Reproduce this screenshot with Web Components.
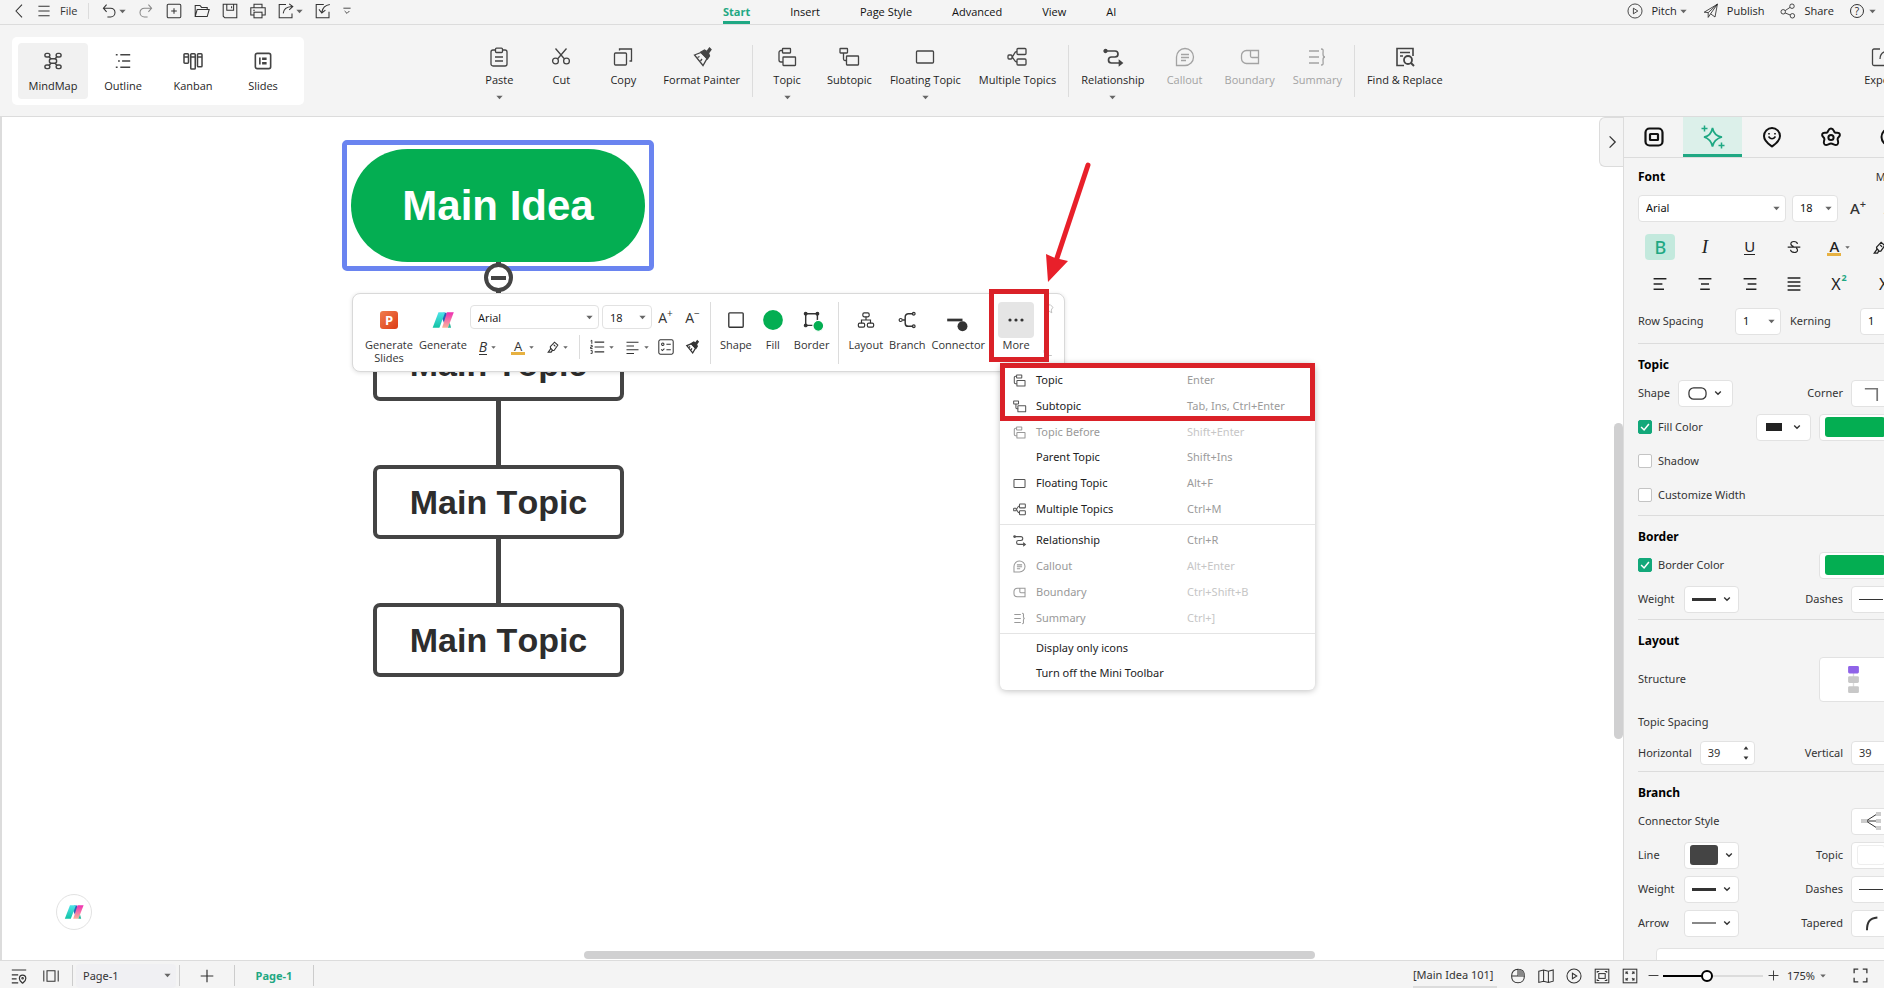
<!DOCTYPE html>
<html lang="en">
<head>
<meta charset="utf-8">
<title>Mind map editor</title>
<style>
  html, body {
    margin: 0;
    height: 100%;
    overflow: hidden;
  }

  body {
    font-family: 'Noto Sans', 'Open Sans', sans-serif;
    font-size: 11px;
    line-height: 16px;
    color: #1f1f1f;
    background: #f4f4f4;
    --green: #1fa883;
    --fill: #04ae52;
    --line: #dcdcdc;
    --ink: #444;
    --bar: #f4f4f4;
  }
</style>
</head>
<body>
<mind-app></mind-app>

<script>
const ICONS = {
  back: '<path d="M12.5 2 5 10l7.5 8"/>',
  menu: '<path d="M3 4h14M3 10h14M3 16h14"/>',
  undo: '<path d="M7 2 3 6.5 7 11M3 6.5h9a5.5 5.5 0 0 1 0 11H8"/>',
  redo: '<path d="m13 2 4 4.500-4 4.500M17 6.500H8a5.500 5.500 0 0 0 0 11h4"/>',
  add: '<rect x="1.500" y="1.500" width="17" height="17" rx="1.500"/><path d="M10 6.500v7M6.500 10h7"/>',
  open: '<path d="M1.500 17V3h6l2 2.500h7V8M1.500 17 4 8h15l-2.500 9z"/>',
  save: '<path d="M1.500 1.500h17v17h-15l-2-2zM6 1.500V9h8.500V1.500M12 4v2.500"/>',
  print: '<path d="M5 6V1.500h10V6M5 15H1V6h18v9h-4"/><rect x="5" y="11.500" width="10" height="7"/><path d="M4 9h2"/>',
  send: '<path d="M10 2H1.500v16.500h16V13M6.500 13c.5-5 3.500-8 11-8.500M14 1l4.500 3.500L14 8.500"/>',
  take: '<path d="M11 2H1.500v16.500h16V11M18.500 2c-6 1-9 4-10 9.500M5 8l3.500 4.500L13 9"/>',
  more: '<path d="M1 3h18M4 10l6 6 6-6" stroke-width="2.200"/>',
  play: '<circle cx="10" cy="10" r="8.800"/><path d="M8 6.500v7l5.500-3.500z"/>',
  plane: '<path d="M1.500 11.500 18 1.500l-3 16-5.500-4L18 1.500 6.500 12v6l3-4.500M1.500 11.500l5 .5"/>',
  share: '<circle cx="4" cy="11" r="2.800"/><circle cx="15" cy="4" r="2.800"/><circle cx="15.500" cy="16" r="2.800"/><path d="m6.500 9.500 6-4M6.500 12.500l6.300 2.500"/>',
  mindmap: '<g stroke-width="1.600"><rect x="6" y="7.500" width="8" height="5" rx="2.200"/><rect x="1" y="1.500" width="5.500" height="4" rx="2"/><rect x="13.500" y="1.500" width="5.500" height="4" rx="2"/><rect x="1" y="14.500" width="5.500" height="4" rx="2"/><rect x="13.500" y="14.500" width="5.500" height="4" rx="2"/><path d="m5.500 5 2.500 3M14.500 5 12 8M5.500 15 8 12.200M14.500 15 12 12.200"/></g>',
  outline: '<path d="M2 3h2M7 3h11M4.500 10h2M9 10h9M2 17h2M7 17h11" stroke-width="1.800"/>',
  kanban: '<g stroke-width="1.700"><rect x="0" y="2" width="5" height="10.500" rx="1"/><rect x="7.500" y="2" width="5" height="17" rx="1"/><rect x="15" y="2" width="5" height="14.500" rx="1"/><path d="M0 5.500h5M7.500 5.500h5M15 5.500h5"/></g>',
  slides: '<rect x="1.500" y="1.500" width="17" height="17" rx="2" stroke-width="1.800"/><path d="M6.500 6v8" stroke-width="1.800"/><path d="M9 6h5v3H9zM9 11h5v3H9z" fill="currentColor" stroke="none"/>',
  paste: '<rect x="2" y="3" width="16" height="16" rx="2"/><rect x="6.500" y="1.200" width="7" height="4.300" rx="1" fill="#f4f4f4"/><path d="M6 10h8M6 14h8"/>',
  cut: '<circle cx="4.500" cy="14" r="2.900"/><circle cx="15.500" cy="14" r="2.900"/><path d="m6.500 12 9-10.500M13.500 12l-9-10.500"/>',
  copy: '<rect x="1.500" y="6" width="12" height="12" rx="1"/><path d="M6.500 3.500V2h12v12h-2"/>',
  brush: '<path d="M2.500 8 9 5.500l6 6-4 7z"/><path d="m9 5 3.500-2 2.500 1.500L17.500 1 19 2.500 16.500 6l1 3-2 3z" fill="currentColor"/><path d="m5.500 10.500 2-1M8.500 14l1.500-2"/>',
  topic: '<rect x="5.500" y="1.500" width="8" height="4.500" rx=".5"/><path d="M5.500 3.500H4a2 2 0 0 0-2 2v7.500a2 2 0 0 0 2 2h2"/><rect x="6" y="10" width="12.500" height="8.500" rx=".5"/>',
  subtopic: '<rect x="1" y="1.500" width="7.500" height="4.500" rx=".5"/><path d="M4.500 6v6a1.500 1.500 0 0 0 1.500 1.500h2"/><rect x="7.500" y="9" width="12" height="9" rx=".5"/>',
  floating: '<rect x="1.500" y="4" width="17" height="12" rx="1"/>',
  multiple: '<rect x="10" y="1.500" width="9" height="6" rx="1"/><rect x="10" y="12" width="9" height="6" rx="1"/><rect x="1" y="8" width="4" height="4" rx="1"/><path d="M5 9.500C7.500 9 6.500 4.500 10 4.500M5 10.500c2.500.5 1.500 4.500 5 4.500"/>',
  relation: '<g stroke-width="1.700"><path d="M2.500 4H12a3 3 0 0 1 0 6H8.500a3 3 0 0 0 0 6H17"/><circle cx="2.500" cy="4" r="1.300" fill="currentColor"/><path d="m16.500 14 2.500 2-2.500 2z" fill="currentColor"/></g>',
  callout: '<path d="M1.500 18.500V10A8.500 8.500 0 1 1 10 18.500z"/><path d="M6 7.500h8M6 10.500h8M6 13.500h5"/>',
  boundary: '<path d="M6.500 3.500h12v13h-12a5 5 0 0 1-5-5v-3a5 5 0 0 1 5-5zM10.500 3.500V9a1.500 1.500 0 0 0 1.500 1.500h6.500"/>',
  summary: '<path d="M2 4h10M2 10h10M2 16h10M14 2c3 0 2 2 2 5q0 3 2 3-2 0-2 3c0 3 1 5-2 5"/>',
  find: '<path d="M18 9V1.500H2v17h7" stroke-width="1.600"/><path d="M5 5.500h10M5 9h3"/><circle cx="13" cy="13" r="4" stroke-width="1.800"/><path d="m16 16 3 3" stroke-width="2"/>',
  export: '<path d="M9 2H3a1.500 1.500 0 0 0-1.500 1.500V17A1.500 1.500 0 0 0 3 18.500h14v-6M9 12c0-5 2-8 9-8M15 1l3 3-3 3"/>',
  bullets: '<path d="M7 4h12M7 10h12M7 16h12" stroke-width="1.500"/><path d="M2 2.500 3.500 1.500V6M2 8h2v2H2v2h2.500M2 14.500h2V18H2" stroke-width="1.200"/>',
  left: '<path d="M2 3h16M2 8h10M2 13h16M2 18h10" stroke-width="1.500"/>',
  alignl: '<path d="M2 3.500h16M2 10h11M2 16.500h13" stroke-width="1.800"/>',
  alignc: '<path d="M2 3.500h16M5 10h10M4 16.500h12" stroke-width="1.800"/>',
  alignr: '<path d="M2 3.500h16M7 10h11M5 16.500h13" stroke-width="1.800"/>',
  alignj: '<path d="M2 2.500h16M2 7.500h16M2 12.500h16M2 17.500h16" stroke-width="1.600"/>',
  checklist: '<rect x="1" y="1" width="18" height="18" rx="2"/><circle cx="6" cy="6.500" r="1.500"/><path d="M10.500 6.500H16M10.500 13.500H16M4 13l1.500 1.500L8 12"/>',
  pen: '<path d="M2 18.500h5l1.500-2.500 3.500-.5 6-8.500-5.500-5-7 7.500.5 3.500z"/><path d="m6 12 3.500 3.500M11 6l3 3"/>',
  square: '<rect x="2" y="2" width="16" height="16" rx="1" stroke-width="1.500"/>',
  disc: '<circle cx="10" cy="10" r="11" fill="#04ae52" stroke="none"/>',
  frame: '<path d="M3 3h13v9M3 3v13h8" stroke-width="1.600"/><circle cx="3" cy="3" r="1.500" fill="currentColor"/><circle cx="16" cy="3" r="1.500" fill="currentColor"/><circle cx="3" cy="16" r="1.500" fill="currentColor"/><circle cx="17" cy="16.500" r="6" fill="#04ae52" stroke="#fff"/>',
  tree: '<rect x="6.500" y="2" width="7" height="4.500" rx="1.500"/><rect x="1.500" y="13.500" width="7" height="4.500" rx="1.500"/><rect x="11.500" y="13.500" width="7" height="4.500" rx="1.500"/><path d="M10 6.500V10M5 13.500V10h10v3.500"/>',
  branch: '<circle cx="3" cy="10" r="1.700"/><path d="M5 10h3M17 3h-5.500A3.500 3.500 0 0 0 8 6.500v7a3.500 3.500 0 0 0 3.500 3.500H17" stroke-width="1.600"/><circle cx="17.500" cy="3" r="1.500"/><circle cx="17.500" cy="17" r="1.500"/>',
  connector: '<path d="M-2 10h17" stroke-width="3"/><circle cx="15" cy="17" r="5.500" fill="currentColor" stroke="none"/>',
  dots: '<g fill="currentColor" stroke="none"><circle cx="2.500" cy="10" r="2"/><circle cx="10" cy="10" r="2"/><circle cx="17.500" cy="10" r="2"/></g>',
  pin: '<path d="m8 4 5-3 5 5-3 5 1 5-5-3-4 3M8 4l-5 2 4 4"/>',
  corner: '<path d="M7 18v-8h9M2 5V0"/>',
  chevron: '<path d="m7 3 7 7-7 7" stroke-width="1.600"/>',
  props: '<g stroke-width="2.200"><rect x="1.500" y="1.500" width="17" height="17" rx="4"/><rect x="6" y="7" width="8" height="6" rx=".5"/></g>',
  spark: '<path d="M9.500 1Q11 9 19 10 11 12 9.500 19.500 8 12 1 10 8 9 9.500 1z" stroke-width="1.700"/><path d="M1.500-1.500v6M-1.500 1.500h6M18.500 15.500v6M15.500 18.500h6" stroke-width="1.500"/>',
  smile: '<path d="M10 19.500c-2-1.500-8-5-8-10.500a8 8 0 0 1 16 0c0 5.500-6 9-8 10.500z" stroke-width="2"/><path d="M6.500 9.500q3.500 4.500 7 0M7 6v1.500M13 6v1.500" stroke-width="1.600"/>',
  flower: '<path d="M10 1.500c3 0 2.500 3.200 4 4 1.500.6 4-.8 4.800 1.500.8 2.500-2 3-2.200 5 0 2 1.800 3.800-.2 5.500-2.500 1.500-3.900-1-6.400-1s-3.900 2.500-6.400 1c-2-1.700-.2-3.500-.2-5.500-.2-2-3-2.500-2.200-5C2 4.700 4.500 6.100 6 5.500c1.500-.8 1-4 4-4z" stroke-width="2"/><circle cx="10" cy="10.500" r="2.600" stroke-width="2"/>',
  clock: '<circle cx="10" cy="10" r="8.500" stroke-width="2"/><path d="M10 5v5l3 2" stroke-width="2"/>',
  strike: '<path d="M15 5.500C14 1 5.500 1 5.500 5.500q0 3 4 3.800M5 14c.5 5 10 5 10 .5q0-2-2-3M1 10.200h18" stroke-width="1.700"/>',
  locate: '<path d="M1 2.500h18M1 8.500h8M1 13.500h6M1 18.500h8" stroke-width="1.500"/><path d="M14.500 19c-1.500-1.500-4-3-4-6a4 4 0 0 1 8 0c0 3-2.500 4.500-4 6z" stroke-width="1.500"/><circle cx="14.500" cy="12.800" r="1"/>',
  strip: '<path d="M1 3v14M19 3v14M5 3.500h10v13H5z"/>',
  plus: '<path d="M10 1v18M1 10h18" stroke-width="1.700"/>',
  minus: '<path d="M1 10h18" stroke-width="1.700"/>',
  mouse: '<path d="M10 1.500c5 0 8 3.500 8 8.500s-3 8.500-8 8.500-8-3.500-8-8.500 3-8.500 8-8.500zM2 10h16M10 1.500V10"/><path d="M10 2c5 0 8 3 8 8h-8z" fill="#888" stroke="none"/>',
  map: '<path d="m1 4 6-1.500 6 1.500 6-1.500v14L13 18l-6-1.500L1 18zM7 2.500v14M13 4v14"/>',
  fit: '<rect x="1.500" y="1.500" width="17" height="17"/><rect x="6" y="7" width="8" height="6"/><path d="M4 6V4.500h2.500M16 6V4.500h-2.500M4 14v1.500h2.500M16 14v1.500h-2.500"/>',
  spread: '<rect x="1.500" y="1.500" width="17" height="17"/><path d="M5 7.500V5h2.500M12.500 5H15v2.500M15 12.500V15h-2.500M7.500 15H5v-2.500M5 5l2.500 2.500M15 5l-2.500 2.500M15 15l-2.500-2.500M5 15l2.500-2.500"/>',
  full: '<path d="M1.500 7V1.500H7M13 1.500h5.500V7M18.500 13v5.500H13M7 18.500H1.500V13" stroke-width="1.700"/>',
  logo: '<defs><linearGradient id="a" x1="0" y1="0" x2="0" y2="1"><stop stop-color="#4fe3ea"/><stop offset="1" stop-color="#12c3a4"/></linearGradient><linearGradient id="b" x1="0" y1="0" x2="0" y2="1"><stop stop-color="#ee2fb2"/><stop offset="1" stop-color="#fbb59b"/></linearGradient></defs><g stroke="none"><path d="M10 2h4l1 8-4 3-2-5z" fill="#2a62b8"/><path d="M5 1.500h7.500L6 18.500h-7.500z" fill="url(#a)"/><path d="M14.500 1.500H22l-6.500 17H9z" fill="url(#b)"/><path d="m17.500 13 1.500 5.500h-3.500z" fill="#27b79c"/></g>',
  stack: '<g stroke="none"><path d="M9.500 2h1v16h-1z" fill="#ddd"/><rect x="6" width="8" height="5.500" rx="1" fill="#8f63e8"/><rect x="6" y="7.500" width="8" height="5" rx="1" fill="#c8c8c8"/><rect x="6" y="15" width="8" height="5" rx="1" fill="#c8c8c8"/></g>',
  fan: '<path d="M5 10 16 3M5 10h11M5 10l11 7" stroke-width="1"/><g fill="#ccc" stroke="none"><path d="M0 8h6v4H0zM15 1h5v4h-5zM15 8h5v4h-5zM15 15h5v4h-5z"/></g>',
  check: '<path d="m3.500 10 5 5 8-10" stroke="#fff" stroke-width="2.500"/>',
  pill: '<rect x="1" y="4" width="18" height="12" rx="5" stroke-width="1.300"/>',
  rectcorner: '<path d="M3 5h13v13" stroke-width="1.800" stroke="#777"/>',
  taper: '<path d="M5 19C5 9 8 4 18 3" stroke-width="2.500"/>',
  down: '<path d="m3 6 7 7 7-7" stroke-width="3.500"/>',
  caret: '<path d="M1 5h18l-9 10z" fill="#666" stroke="none"/>',
  caretup: '<path d="M2 15h16L10 4z" fill="currentColor" stroke="none"/>',
  caretdown: '<path d="M2 5h16l-8 11z" fill="currentColor" stroke="none"/>'
};

const RESET = `
  :host { display: block; }
  * { box-sizing: border-box; }
  button, input, select {
    font: inherit;
    color: inherit;
    margin: 0;
    padding: 0;
    border: 0;
    background: none;
  }
  button { display: flex; align-items: center; justify-content: center; }
  a { color: inherit; text-decoration: none; }
`;

class Base extends HTMLElement {
  constructor() {
    super();

    this.attachShadow({ mode: 'open' });
  }

  render(css, html) {
    this.shadowRoot.innerHTML = `<style>${RESET}${css}</style>${html}`;
  }
}

class UiIcon extends Base {
  connectedCallback() {
    const size = this.getAttribute('size') || 16;

    this.render(
      `
      :host { display: block; flex: none; }
      svg { display: block; overflow: visible; }
      `,
      `<svg width="${size}" height="${size}" viewBox="0 0 20 20" fill="none" stroke="currentColor"
        stroke-width="${this.getAttribute('weight') || 1.3}" aria-hidden="true">${ICONS[this.getAttribute('name')]}</svg>`
    );
  }
}

// Drop-down with its arrow; the options come from a comma separated attribute
class UiSelect extends Base {
  connectedCallback() {
    const options = this.getAttribute('options').split(',');

    this.render(
      `
      :host { display: grid; align-items: center; height: 27px; background: #fff;
        border: 1px solid #e2e2e2; border-radius: 4px; box-sizing: border-box; }
      select, ui-icon { grid-area: 1 / 1; }
      select { width: 100%; height: 100%; padding-left: 7px; appearance: none; outline: 0; }
      ui-icon { justify-self: end; margin-right: 5px; pointer-events: none; }
      `,
      `<select aria-label="${this.getAttribute('label')}">
        ${options.map((option) => `<option>${option}</option>`).join('')}
      </select>
      <ui-icon name="caret" size="7"></ui-icon>`
    );
  }
}

class TitleBar extends Base {
  connectedCallback() {
    const tabs = ['Insert', 'Page Style', 'Advanced', 'View', 'AI'];

    this.render(
      `
      :host { border-bottom: 1px solid var(--line); background: var(--bar); font-family: 'Open Sans', sans-serif; }
      header { display: grid; grid-template-columns: 723fr 397fr 800fr; height: 24px; }
      .left, .right { display: flex; align-items: center; gap: 12px; padding-bottom: 2px; }
      .left { padding-left: 12px; color: #333; }
      .left .start { display: flex; align-items: center; gap: 8px; padding-right: 11px;
        border-right: 1px solid var(--line); height: 16px; }
      .pair { gap: 2px; }
      .dim { color: #888; }
      nav { display: flex; gap: 40px; white-space: nowrap; color: #111; }
      nav a { padding-top: 4px; height: 24px; }
      nav a.on { color: var(--green); font-weight: bold; border-bottom: 3px solid var(--green); }
      .right { justify-content: flex-end; padding-right: 44px; gap: 16px; }
      .right button { gap: 8px; }
      .right button ui-icon + ui-icon, .right span + ui-icon { margin-left: -5px; }
      .help { width: 14px; height: 14px; border: 1px solid #333; border-radius: 50%; font-size: 10px;
        line-height: 12px; margin-right: 2px; }
      `,
      `<header>
        <div class="left">
          <div class="start">
            <button aria-label="Back"><ui-icon name="back"></ui-icon></button>
            <button aria-label="Menu"><ui-icon name="menu"></ui-icon></button>
            <button>File</button>
          </div>
          <button class="pair" aria-label="Undo"><ui-icon name="undo"></ui-icon><ui-icon name="caret" size="7"></ui-icon></button>
          <button class="dim" aria-label="Redo"><ui-icon name="redo"></ui-icon></button>
          ${['add', 'open', 'save', 'print'].map((name) => `<button aria-label="${name}"><ui-icon name="${name}"></ui-icon></button>`).join('')}
          <button class="pair" aria-label="Send"><ui-icon name="send"></ui-icon><ui-icon name="caret" size="7"></ui-icon></button>
          <button aria-label="Import"><ui-icon name="take"></ui-icon></button>
          <button aria-label="Customize"><ui-icon name="more" size="8"></ui-icon></button>
        </div>
        <nav>
          <a class="on" href="#start">Start</a>
          ${tabs.map((tab) => `<a href="#tab">${tab}</a>`).join('')}
        </nav>
        <div class="right">
          <button><ui-icon name="play" weight="1"></ui-icon><span>Pitch</span><ui-icon name="caret" size="7"></ui-icon></button>
          <button><ui-icon name="plane" weight="1"></ui-icon>Publish</button>
          <button><ui-icon name="share" weight="1"></ui-icon>Share</button>
          <button aria-label="Help"><span class="help">?</span><ui-icon name="caret" size="7"></ui-icon></button>
        </div>
      </header>`
    );
  }
}

class RibbonButton extends Base {
  connectedCallback() {
    this.render(
      `
      button { flex-direction: column; justify-content: flex-start; min-width: 62px; height: 68px; padding: 2px 9px 0;
        white-space: nowrap; }
      ui-icon { color: var(--ink); }
      .label { margin: 5px 0 6px; }
      :host([disabled]) button, :host([disabled]) ui-icon { color: #a3a3a3; }
      :host([mode]) button { width: 70px; height: 56px; padding: 9px 0 0; border-radius: 4px; }
      :host([mode]) .label { margin-top: 8px; }
      :host([on]) button { background: #f1f1f1; }
      `,
      `<button${this.hasAttribute('disabled') ? ' disabled' : ''}>
        <ui-icon name="${this.getAttribute('icon')}" size="${this.hasAttribute('mode') ? 18 : 20}"></ui-icon>
        <span class="label"><slot></slot></span>
        ${this.hasAttribute('drop') ? '<ui-icon name="caret" size="7"></ui-icon>' : ''}
      </button>`
    );
  }
}

class RibbonBar extends Base {
  connectedCallback() {
    this.render(
      `
      :host { background: var(--bar); border-bottom: 1px solid var(--line); font-family: 'Open Sans', sans-serif; }
      section { display: grid; grid-template-columns: 1fr auto 1fr; align-items: start; height: 91px; padding: 12px 0 0; }
      .modes { display: flex; justify-self: start; margin-left: 12px; padding: 6px; background: #fff; border-radius: 5px; }
      .tools { display: flex; padding-top: 8px; }
      .rule { width: 1px; height: 52px; margin: 0 3px; background: var(--line); }
      .end { justify-self: end; padding: 8px 8px 0 0; }
      `,
      `<section>
        <div class="modes">
          <ribbon-button mode on icon="mindmap">MindMap</ribbon-button>
          <ribbon-button mode icon="outline">Outline</ribbon-button>
          <ribbon-button mode icon="kanban">Kanban</ribbon-button>
          <ribbon-button mode icon="slides">Slides</ribbon-button>
        </div>
        <div class="tools">
          <ribbon-button icon="paste" drop>Paste</ribbon-button>
          <ribbon-button icon="cut">Cut</ribbon-button>
          <ribbon-button icon="copy">Copy</ribbon-button>
          <ribbon-button icon="brush">Format Painter</ribbon-button>
          <div class="rule"></div>
          <ribbon-button icon="topic" drop>Topic</ribbon-button>
          <ribbon-button icon="subtopic">Subtopic</ribbon-button>
          <ribbon-button icon="floating" drop>Floating Topic</ribbon-button>
          <ribbon-button icon="multiple">Multiple Topics</ribbon-button>
          <div class="rule"></div>
          <ribbon-button icon="relation" drop>Relationship</ribbon-button>
          <ribbon-button icon="callout" disabled>Callout</ribbon-button>
          <ribbon-button icon="boundary" disabled>Boundary</ribbon-button>
          <ribbon-button icon="summary" disabled>Summary</ribbon-button>
          <div class="rule"></div>
          <ribbon-button icon="find">Find &amp; Replace</ribbon-button>
        </div>
        <div class="end"><ribbon-button icon="export">Export</ribbon-button></div>
      </section>`
    );
  }
}

class MiniToolbar extends Base {
  connectedCallback() {
    this.render(
      `
      :host { background: #fff; border: 1px solid #d9d9d9; border-radius: 8px; box-shadow: 0 1px 4px rgba(0, 0, 0, .12);
        font-family: 'Open Sans', sans-serif; }
      .bar { display: flex; height: 77px; padding: 8px 10px 0 9px; color: #333; line-height: 13px; }
      .tool { flex-direction: column; justify-content: flex-start; padding-top: 9px; gap: 9px; height: 62px; }
      .wide { width: 54px; }
      .p { width: 18px; height: 18px; border-radius: 3px; background: linear-gradient(135deg, #ef7d4f, #dd3c14);
        color: #fff; font: bold 13px/18px 'Open Sans', sans-serif; }
      .format { display: flex; flex-direction: column; gap: 6px; padding-top: 3px; }
      .row { display: flex; align-items: center; height: 24px; }
      .row ui-select { height: 24px; color: #111; }
      .family { width: 129px; margin-right: 3px; }
      .size { width: 50px; }
      .a { width: 27px; font-size: 14px; }
      .a sup { font-size: 10px; line-height: 0; margin-top: -8px; }
      .drop { width: 35px; gap: 4px; }
      .check { width: 24px; }
      .brush { width: 28px; }
      .b { font-size: 14px; font-style: italic; line-height: 14px; border-bottom: 1px solid #333; }
      .color { font-size: 13px; line-height: 12px; width: 14px; border-bottom: 3px solid #e7b141; }
      .row .rule { height: 24px; margin: 0 4px; }
      .rule { width: 1px; height: 62px; background: var(--line); }
      .format + .rule { margin-left: 4px; }
      .group { display: flex; gap: 12px; padding: 0 9px; }
      .group.tight { gap: 6px; padding-right: 7px; }
      .more { width: 36px; margin-left: 6px; padding-top: 0; gap: 0; }
      .more span { display: grid; place-items: center; width: 36px; height: 36px; border-radius: 4px; background: #e5e5e5; }
      .side { display: flex; flex-direction: column; justify-content: space-between; padding: 2px 0 10px 9px; color: #aaa; }
      `,
      `<div class="bar">
        <button class="tool wide"><span class="p">P</span><span>Generate<br>Slides</span></button>
        <button class="tool wide"><ui-icon name="logo" size="18"></ui-icon>Generate</button>
        <div class="format">
          <div class="row">
            <ui-select class="family" label="Font" options="Arial,Inter"></ui-select>
            <ui-select class="size" label="Font size" options="18,20,24"></ui-select>
            <button class="a">A<sup>+</sup></button>
            <button class="a">A<sup>−</sup></button>
          </div>
          <div class="row">
            <button class="drop"><span class="b">B</span><ui-icon name="caret" size="5"></ui-icon></button>
            <button class="drop"><span class="color">A</span><ui-icon name="caret" size="5"></ui-icon></button>
            <button class="drop" aria-label="Highlight"><ui-icon name="pen" size="12" weight="1.800"></ui-icon><ui-icon name="caret" size="5"></ui-icon></button>
            <div class="rule"></div>
            <button class="drop" aria-label="List"><ui-icon name="bullets"></ui-icon><ui-icon name="caret" size="5"></ui-icon></button>
            <button class="drop" aria-label="Align"><ui-icon name="left" size="15"></ui-icon><ui-icon name="caret" size="5"></ui-icon></button>
            <button class="check" aria-label="Checklist"><ui-icon name="checklist"></ui-icon></button>
            <button class="brush" aria-label="Format painter"><ui-icon name="brush" size="14" weight="1.800"></ui-icon></button>
          </div>
        </div>
        <div class="rule"></div>
        <div class="group">
          <button class="tool"><ui-icon name="square" size="18"></ui-icon>Shape</button>
          <button class="tool"><ui-icon name="disc" size="18"></ui-icon>Fill</button>
          <button class="tool"><ui-icon name="frame" size="18"></ui-icon>Border</button>
        </div>
        <div class="rule"></div>
        <div class="group tight">
          <button class="tool"><ui-icon name="tree" size="18"></ui-icon>Layout</button>
          <button class="tool"><ui-icon name="branch" size="18"></ui-icon>Branch</button>
          <button class="tool"><ui-icon name="connector" size="18"></ui-icon>Connector</button>
        </div>
        <button class="tool more"><span><ui-icon name="dots"></ui-icon></span>More</button>
        <div class="side"><ui-icon name="pin" size="11"></ui-icon><ui-icon name="corner" size="11"></ui-icon></div>
      </div>`
    );
  }
}

class MoreMenu extends Base {
  connectedCallback() {
    const groups = [
      [
        ['topic', 'Topic', 'Enter'],
        ['subtopic', 'Subtopic', 'Tab, Ins, Ctrl+Enter'],
        ['topic', 'Topic Before', 'Shift+Enter', true],
        ['', 'Parent Topic', 'Shift+Ins'],
        ['floating', 'Floating Topic', 'Alt+F'],
        ['multiple', 'Multiple Topics', 'Ctrl+M']
      ],
      [
        ['relation', 'Relationship', 'Ctrl+R'],
        ['callout', 'Callout', 'Alt+Enter', true],
        ['boundary', 'Boundary', 'Ctrl+Shift+B', true],
        ['summary', 'Summary', 'Ctrl+]', true]
      ],
      [
        ['', 'Display only icons', ''],
        ['', 'Turn off the Mini Toolbar', '']
      ]
    ];

    this.render(
      `
      :host { width: 315px; background: #fff; border-radius: 6px; box-shadow: 0 1px 6px rgba(0, 0, 0, .25); padding: 4px 0; box-sizing: border-box; }
      .group + .group { border-top: 1px solid #e4e4e4; margin-top: 2px; padding-top: 2px; }
      button { display: grid; grid-template-columns: 23px 151px auto; justify-content: start; justify-items: start;
        width: 100%; height: 26px; padding-left: 13px; color: #222; }
      button.plain { height: 25px; padding-bottom: 2px; }
      .key { color: #9b9b9b; }
      ui-icon { color: #555; }
      button:disabled, button:disabled ui-icon { color: #999; }
      button:disabled .key { color: #c6c6c6; }
      `,
      groups
        .map(
          (rows) => `
        <div class="group" role="group">
          ${rows
            .map(
              ([icon, label, key, off]) => `
            <button role="menuitem" class="${icon ? '' : 'plain'}"${off ? ' disabled' : ''}>
              ${icon ? `<ui-icon name="${icon}" size="13" weight="1.600"></ui-icon>` : '<i></i>'}
              <span>${label}</span><span class="key">${key}</span>
            </button>`
            )
            .join('')}
        </div>`
        )
        .join('')
    );
  }
}

class MapCanvas extends Base {
  connectedCallback() {
    this.render(
      `
      :host { position: relative; overflow: hidden; background: #fff; box-shadow: inset 2px 0 #dcdcdc; }
      :host > * { position: absolute; }
      .links { left: 496px; top: 144px; width: 5px; height: 380px; background: #444; }
      .node { display: grid; place-items: center; left: 373px; width: 251px; height: 74px; background: #fff; border: 4px solid #444;
        border-radius: 7px; font: bold 34px/40px 'Liberation Sans', Arial, sans-serif; font-kerning: none; color: #2d2d2d; }
      .root { left: 351px; top: 32px; width: 294px; height: 113px; border: 0; border-radius: 57px; background: var(--fill);
        color: #fff; font-size: 42px; }
      .pick { left: 342px; top: 23px; width: 312px; height: 131px; border: 5px solid #6a84f0; border-radius: 5px; }
      .fold { left: 484px; top: 146px; width: 29px; height: 29px; border: 4px solid #444; border-radius: 50%; background: #fff; }
      .fold i { width: 15px; height: 4px; background: #444; }
      mini-toolbar { left: 352px; top: 176px; }
      more-menu { left: 1000px; top: 246px; }
      .mark { border: 5px solid #da2128; }
      .mark.a { left: 989px; top: 172px; width: 60px; height: 73px; }
      .mark.b { left: 1000px; top: 246px; width: 315px; height: 58px; }
      .arrow { left: 1040px; top: 40px; }
      .ai { left: 56px; bottom: 30px; width: 36px; height: 36px; border: 1px solid #e2e2e2; border-radius: 50%; background: #fff; }
      .thumb { background: #d0d0d1; border-radius: 5px; }
      .h { left: 36%; right: 19%; bottom: 1px; height: 8px; }
      .v { right: 0; top: 306px; width: 9px; height: 316px; }
      .fly { right: 0; top: 0; width: 24px; height: 50px; background: var(--bar); border: 1px solid var(--line); border-right: 0;
        border-radius: 6px 0 0 6px; color: #333; }
      `,
      `<div class="links"></div>
      <div class="node" style="top: 210px">Main Topic</div>
      <div class="node" style="top: 348px">Main Topic</div>
      <div class="node" style="top: 486px">Main Topic</div>
      <div class="pick"></div>
      <div class="node root">Main Idea</div>
      <button class="fold" aria-label="Collapse"><i></i></button>
      <mini-toolbar></mini-toolbar>
      <more-menu></more-menu>
      <div class="mark a"></div>
      <div class="mark b"></div>
      <svg class="arrow" width="56" height="130" viewBox="0 0 56 130" aria-hidden="true">
        <path d="M48 8 15 107" stroke="#e8202a" stroke-width="5" stroke-linecap="round"/>
        <path d="M8 125 6 97l9 4 13 3z" fill="#e8202a"/>
      </svg>
      <button class="ai" aria-label="Assistant"><ui-icon name="logo" size="16"></ui-icon></button>
      <div class="thumb h"></div>
      <div class="thumb v"></div>
      <button class="fly" aria-label="Collapse panel"><ui-icon name="chevron"></ui-icon></button>`
    );
  }
}

// Button that shows a preview (line, shape or swatch) and a chevron
class PreviewButton extends Base {
  connectedCallback() {
    this.render(
      `
      button { width: 55px; height: 27px; gap: 7px; background: #fff; border: 1px solid #e2e2e2; border-radius: 4px; color: #333; }
      :host([wide]) button { width: 87px; }
      `,
      `<button aria-label="${this.getAttribute('label')}"><slot></slot><ui-icon name="down" size="8"></ui-icon></button>`
    );
  }
}

class PanelSection extends Base {
  connectedCallback() {
    this.render(
      `
      :host { padding: 10px 0 3px; border-bottom: 1px solid var(--line); }
      :host([first]) { padding-top: 8px; }
      :host([last]) { border: 0; padding-bottom: 0; }
      .head { display: flex; justify-content: space-between; align-items: center; height: 22px; }
      h2 { margin: 0; font-size: 12px; color: #000; }
      `,
      `<div class="head"><h2>${this.getAttribute('heading')}</h2><slot name="action"></slot></div><slot></slot>`
    );
  }
}

class FormatPanel extends Base {
  connectedCallback() {
    const spin = (id, label) => `
      <label for="${id}">${label}</label>
      <span class="spin"><input id="${id}" value="39" inputmode="numeric"><span><ui-icon name="caretup" size="6"></ui-icon><ui-icon name="caretdown" size="6"></ui-icon></span></span>`;

    this.render(
      `
      :host { background: var(--bar); border-left: 1px solid var(--line); color: #333; overflow: hidden; }
      nav { display: grid; grid-template-columns: repeat(5, 59px); height: 41px; border-bottom: 1px solid var(--line); color: #111; }
      nav button { padding-top: 3px; border-bottom: 3px solid transparent; }
      nav .on { color: var(--green); background: #dcf0ea; border-color: var(--green); }
      .body { padding: 0 14px; }
      .more { padding-right: 3px; }
      .row { display: flex; align-items: center; height: 34px; gap: 8px; white-space: nowrap; }
      .push { margin-left: auto; }
      .r40 { height: 40px; gap: 6px; }
      .icons { display: grid; grid-template-columns: repeat(6, 1fr); align-items: center; height: 38px; color: #222; }
      .icons button { justify-self: center; height: 26px; gap: 4px; }
      .icons.low { height: 36px; }
      .fam { flex: 1; }
      .size { width: 46px; }
      ui-select { color: #111; }
      .a { width: 28px; font-size: 15px; font-weight: 500; }
      .a sup { font-size: 11px; line-height: 0; margin-top: -8px; }
      .bold { width: 30px; border-radius: 4px; background: #c3e9dd; color: var(--green); font-size: 18px; font-weight: 500; }
      .it { font: italic 19px 'Liberation Serif', serif; }
      .un { font-size: 15px; line-height: 15px; border-bottom: 1px solid #222; }
      .color { width: 14px; font-size: 15px; font-weight: 500; line-height: 14px; border-bottom: 3px solid #e7b141; }
      .x { font-size: 16px; }
      .x sup { font-size: 9px; font-weight: bold; line-height: 0; margin: -12px 0 0 -3px; color: var(--green); }
      .spacing { display: grid; grid-template-columns: 1fr 46px 61px 46px; gap: 9px; align-items: center; height: 38px; }
      .tick { display: flex; align-items: center; gap: 6px; }
      .tick input { appearance: none; width: 14px; height: 14px; border: 1px solid #c4c4c4; border-radius: 2px; background: #fff; }
      .tick input:checked { background: #12a87a; border-color: #12a87a; }
      .tick input, .tick ui-icon { grid-area: 1 / 1; }
      .box { display: grid; place-items: center; }
      .structure { height: 54px; }
      .structure button { width: 87px; height: 45px; padding-left: 12px; background: #fff; border: 1px solid #e2e2e2; border-radius: 4px; gap: 22px; }
      .h32 { height: 32px; }
      .h30 { height: 30px; }
      .spin { display: flex; align-items: center; width: 55px; height: 24px; background: #fff; border: 1px solid #e2e2e2; border-radius: 4px; }
      .spin input { width: 42px; padding-left: 7px; outline: 0; }
      .spin span { display: flex; flex-direction: column; gap: 4px; }
      .stroke { width: 24px; height: 3px; background: #333; }
      .thin { height: 1px; }
      .grey { height: 2px; background: #888; }
      .swatch { width: 60px; height: 20px; border-radius: 3px; background: var(--fill); }
      .dark { width: 28px; background: #444; }
      .none { width: 28px; background: #fff; border: 1px solid #eee; }
      .solid { width: 16px; height: 8px; background: #222; margin-right: 4px; }
      .w { min-width: 38px; }
      .theme { height: 40px; margin: 8px 0 0 18px; background: #fff; border: 1px solid #e2e2e2; border-radius: 4px; }
      `,
      `<nav>
        <button aria-label="Page"><ui-icon name="props" size="20"></ui-icon></button>
        <button class="on" aria-label="Style"><ui-icon name="spark" size="20"></ui-icon></button>
        <button aria-label="Mark"><ui-icon name="smile" size="20"></ui-icon></button>
        <button aria-label="Clipart"><ui-icon name="flower" size="20"></ui-icon></button>
        <button aria-label="History"><ui-icon name="clock" size="20"></ui-icon></button>
      </nav>
      <div class="body">
        <panel-section first heading="Font">
          <a class="more" slot="action" href="#more">More</a>
          <div class="row r40">
            <ui-select class="fam" label="Font" options="Arial,Inter"></ui-select>
            <ui-select class="size" label="Font size" options="18,20,24"></ui-select>
            <button class="a">A<sup>+</sup></button>
            <button class="a">A<sup>−</sup></button>
          </div>
          <div class="icons">
            <button class="bold">B</button>
            <button class="it">I</button>
            <button><span class="un">U</span></button>
            <button aria-label="Strikethrough"><ui-icon name="strike" size="14"></ui-icon></button>
            <button><span class="color">A</span><ui-icon name="caret" size="5"></ui-icon></button>
            <button aria-label="Highlight"><ui-icon name="pen" size="13" weight="2"></ui-icon><ui-icon name="caret" size="5"></ui-icon></button>
          </div>
          <div class="icons low">
            <button aria-label="Align left"><ui-icon name="alignl"></ui-icon></button>
            <button aria-label="Align center"><ui-icon name="alignc"></ui-icon></button>
            <button aria-label="Align right"><ui-icon name="alignr"></ui-icon></button>
            <button aria-label="Justify"><ui-icon name="alignj"></ui-icon></button>
            <button class="x">X<sup>2</sup></button>
            <button class="x">X</button>
          </div>
          <div class="spacing">
            <span>Row Spacing</span><ui-select label="Row spacing" options="1,2"></ui-select>
            <span>Kerning</span><ui-select label="Kerning" options="1,2"></ui-select>
          </div>
        </panel-section>
        <panel-section heading="Topic">
          <div class="row">
            <span>Shape</span><preview-button label="Shape"><ui-icon name="pill" size="19"></ui-icon></preview-button>
            <span class="push">Corner</span><preview-button label="Corner"><ui-icon name="rectcorner" size="19"></ui-icon></preview-button>
          </div>
          <div class="row">
            <label class="tick"><span class="box"><input type="checkbox" checked><ui-icon name="check" size="12"></ui-icon></span>Fill Color</label>
            <preview-button class="push" label="Fill type"><span class="solid"></span></preview-button>
            <preview-button wide label="Fill color"><span class="swatch"></span></preview-button>
          </div>
          <div class="row"><label class="tick"><input type="checkbox">Shadow</label></div>
          <div class="row"><label class="tick"><input type="checkbox">Customize Width</label></div>
        </panel-section>
        <panel-section heading="Border">
          <div class="row">
            <label class="tick"><span class="box"><input type="checkbox" checked><ui-icon name="check" size="12"></ui-icon></span>Border Color</label>
            <preview-button class="push" wide label="Border color"><span class="swatch"></span></preview-button>
          </div>
          <div class="row">
            <span class="w">Weight</span><preview-button label="Weight"><span class="stroke"></span></preview-button>
            <span class="push">Dashes</span><preview-button label="Dashes"><span class="stroke thin"></span></preview-button>
          </div>
        </panel-section>
        <panel-section heading="Layout">
          <div class="row structure">
            <span>Structure</span>
            <button class="push" aria-label="Structure"><ui-icon name="stack" size="27"></ui-icon><ui-icon name="down" size="8"></ui-icon></button>
          </div>
          <div class="row h32">Topic Spacing</div>
          <div class="row h30">
            ${spin('h', 'Horizontal')}
            <span class="push"></span>
            ${spin('v', 'Vertical')}
          </div>
        </panel-section>
        <panel-section last heading="Branch">
          <div class="row">
            <span>Connector Style</span>
            <preview-button class="push" label="Connector style"><ui-icon name="fan" size="20"></ui-icon></preview-button>
          </div>
          <div class="row">
            <span class="w">Line</span><preview-button label="Line"><span class="swatch dark"></span></preview-button>
            <span class="push">Topic</span><preview-button label="Topic"><span class="swatch none"></span></preview-button>
          </div>
          <div class="row">
            <span class="w">Weight</span><preview-button label="Weight"><span class="stroke"></span></preview-button>
            <span class="push">Dashes</span><preview-button label="Dashes"><span class="stroke thin"></span></preview-button>
          </div>
          <div class="row">
            <span class="w">Arrow</span><preview-button label="Arrow"><span class="stroke grey"></span></preview-button>
            <span class="push">Tapered</span><preview-button label="Tapered"><ui-icon name="taper" size="16"></ui-icon></preview-button>
          </div>
        </panel-section>
        <div class="theme"></div>
      </div>`
    );
  }
}

class StatusBar extends Base {
  connectedCallback() {
    this.render(
      `
      :host { background: var(--bar); border-top: 1px solid var(--line); }
      footer { display: flex; align-items: center; height: 27px; padding: 2px 52px 0 11px; color: #333; }
      .views { display: flex; gap: 16px; padding-right: 13px; }
      .cell { display: flex; align-items: center; justify-content: center; height: 21px; border-left: 1px solid #ccc; }
      .pages { width: 107px; }
      .pages ui-select { width: 100px; height: 24px; border: 0; background: #f0f0f3; }
      .new { width: 55px; }
      .current { width: 80px; border-right: 1px solid #ccc; color: var(--green); font-weight: bold; }
      .info { align-self: stretch; margin-left: auto; width: 84px; padding-top: 4px; line-height: 16px;
        border-bottom: 2px solid #dcdcdc; white-space: nowrap; }
      .tools { display: flex; align-items: center; gap: 12px; padding: 0 10px 0 13px; }
      input { width: 100px; height: 12px; margin: 0 5px 0 4px; appearance: none; background: linear-gradient(#000, #000) 0 5px / 43px 2px no-repeat,
        linear-gradient(#dcdcdc, #dcdcdc) 0 5px / 100% 2px no-repeat; }
      input::-webkit-slider-thumb { appearance: none; width: 12px; height: 12px; border: 2px solid #000; border-radius: 50%; background: #fff; }
      .zoom { gap: 5px; margin: 0 27px 0 8px; }
      `,
      `<footer>
        <div class="views">
          <button aria-label="Locate"><ui-icon name="locate"></ui-icon></button>
          <button aria-label="Slides"><ui-icon name="strip"></ui-icon></button>
        </div>
        <div class="cell pages"><ui-select label="Page" options="Page-1"></ui-select></div>
        <div class="cell new"><button aria-label="Add page"><ui-icon name="plus" size="14"></ui-icon></button></div>
        <a class="cell current" href="#page-1">Page-1</a>
        <span class="info">[Main Idea 101]</span>
        <div class="tools">
          ${['mouse', 'map', 'play', 'fit', 'spread'].map((name) => `<button aria-label="${name}"><ui-icon name="${name}"></ui-icon></button>`).join('')}
        </div>
        <button aria-label="Zoom out"><ui-icon name="minus" size="11"></ui-icon></button>
        <input type="range" min="0" max="100" value="43" aria-label="Zoom">
        <button aria-label="Zoom in"><ui-icon name="plus" size="11"></ui-icon></button>
        <button class="zoom">175%<ui-icon name="caret" size="6"></ui-icon></button>
        <button aria-label="Full screen"><ui-icon name="full" size="15"></ui-icon></button>
      </footer>`
    );
  }
}

class MindApp extends Base {
  connectedCallback() {
    this.render(
      `
      :host { display: flex; flex-direction: column; width: calc(100% + 36px); height: 100vh; }
      main { display: flex; flex: 1; min-height: 0; }
      map-canvas { flex: 1; }
      format-panel { width: 297px; }
      `,
      `<title-bar></title-bar>
      <ribbon-bar></ribbon-bar>
      <main>
        <map-canvas></map-canvas>
        <format-panel></format-panel>
      </main>
      <status-bar></status-bar>`
    );
  }
}

customElements.define('ui-icon', UiIcon);
customElements.define('ui-select', UiSelect);
customElements.define('title-bar', TitleBar);
customElements.define('ribbon-button', RibbonButton);
customElements.define('ribbon-bar', RibbonBar);
customElements.define('mini-toolbar', MiniToolbar);
customElements.define('more-menu', MoreMenu);
customElements.define('map-canvas', MapCanvas);
customElements.define('preview-button', PreviewButton);
customElements.define('panel-section', PanelSection);
customElements.define('format-panel', FormatPanel);
customElements.define('status-bar', StatusBar);
customElements.define('mind-app', MindApp);
</script>
</body>
</html>
